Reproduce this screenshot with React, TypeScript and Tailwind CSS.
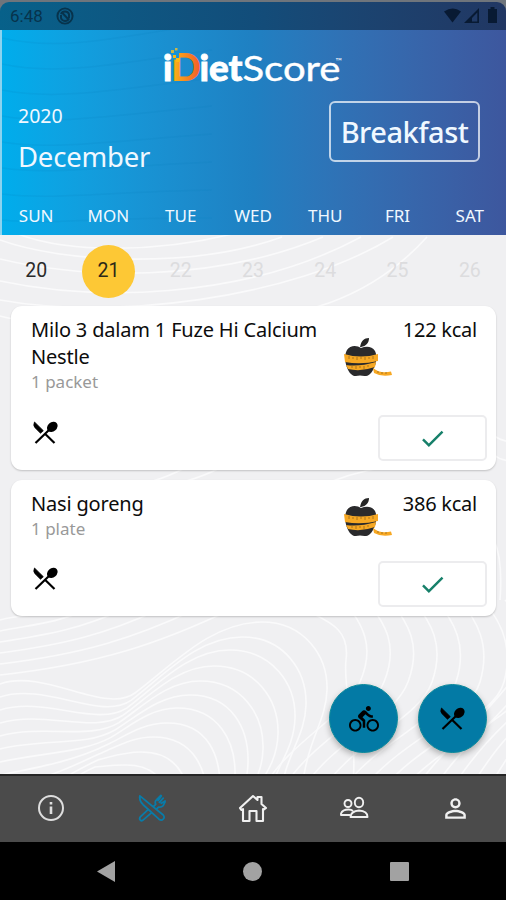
import { FC, ReactNode } from 'react';
import { MdCheck, MdDirectionsBike, MdOutlinePersonOutline } from 'react-icons/md';

interface Meal {
    name: string;
    portion: string;
    kcal: number;
    appleClass: string;
    heightClass: string;
}

const days = ['SUN', 'MON', 'TUE', 'WED', 'THU', 'FRI', 'SAT'];
const dates = [20, 21, 22, 23, 24, 25, 26];
const today = 21;

const meals: Meal[] = [
    {
        name: 'Milo 3 dalam 1 Fuze Hi Calcium Nestle',
        portion: '1 packet',
        kcal: 122,
        appleClass: 'mt-[22px]',
        heightClass: 'h-[164px]',
    },
    {
        name: 'Nasi goreng',
        portion: '1 plate',
        kcal: 386,
        appleClass: 'mt-[8px]',
        heightClass: 'h-[136px]',
    },
];

// Nested loops at the bottom left: [peakX, peakY, rightX]
const loops = [
    [262, 622, 327],
    [242, 637, 306],
    [230, 650, 295],
    [214, 666, 278],
    [200, 681, 263],
    [190, 695, 248],
    [177, 708, 235],
    [167, 723, 220],
    [153, 737, 207],
    [141, 752, 190],
    [126, 765, 170],
];

const loopPath = (x: number, y: number, r: number, i: number) => {
    const px = 135 - i * 4;
    const py = 693 + i * 7.4;
    const y0 = 684 + i * 13;
    return [
        `M0 ${y0}`,
        `C45 ${y0 - 16 + i} ${px - 30} ${py + 22 - i} ${px} ${py}`,
        `C${px + (x - px) * 0.3} ${py + (y - py) * 0.4} ${x - (x - px) * 0.4} ${y} ${x} ${y}`,
        `C${x + 42} ${y} ${r + 1} ${y + 34} ${r} ${y + 68}`,
        `S${r - 22} ${y + 118} ${r - 26} 800`,
    ].join('');
};

const Contours: FC = () => (
    <svg
        className="absolute inset-0 w-full h-full"
        viewBox="0 235 506 539"
        preserveAspectRatio="none"
        fill="none"
        stroke="#fafafb"
        strokeWidth="1.6"
    >
        {loops.map(([x, y, r], i) => (
            <path key={i} d={loopPath(x, y, r, i)} />
        ))}
        {[0, 1, 2, 3, 4, 5].map((i) => (
            <path key={i} d={`M0 ${620 + i * 11}C${20 + i * 16} ${614 + i * 10} ${30 + i * 26} ${618 + i * 5} ${50 + i * 36} 610`} />
        ))}
        <path d="M350 800C362 750 342 690 346 660S330 622 310 612" />
        {[0, 1, 2, 3, 4, 5, 6, 7].map((i) => (
            <path
                key={i}
                d={`M${344 + i * 23} 600C${362 + i * 23} ${625 - i} ${376 + i * 23} 645 ${360 + i * 24} 682S${290 + i * 22} 740 ${262 + i * 20} 790`}
            />
        ))}
        {[0, 1, 2, 3, 4, 5].map((i) => (
            <path key={i} d={`M${415 + i * 18} 790C${440 + i * 18} 750 ${480 + i * 12} 724 520 ${670 + i * 20}`} />
        ))}
        <path d="M18 234C70 254 160 252 232 234" />
        <path d="M0 240C60 262 190 270 282 237" />
        <path d="M0 259C80 278 210 284 323 237" />
        <path d="M0 281C90 300 240 302 361 237" />
        <path d="M0 300C110 320 290 300 393 237" />
        <path d="M200 325C300 320 370 300 427 237" />
        <path d="M0 316C20 322 40 320 60 318M120 490Q165 480 190 465M150 490Q200 480 225 465M330 482Q365 468 410 464" />
        <path d="M494 436Q500 440 510 442M494 455Q500 460 510 461M494 540Q503 560 500 600" />
    </svg>
);

const Logo: FC = () => (
    <svg className="absolute left-[155px] top-[30px]" width="200" height="70" viewBox="155 30 200 70">
        <defs>
            <linearGradient id="d" x1="0" x2="1">
                <stop offset="0" stopColor="#fcb814" />
                <stop offset="1" stopColor="#f15a2b" />
            </linearGradient>
        </defs>
        <g fontFamily="Lato, sans-serif">
            <text x="171" y="81" fontSize="37.5" fontWeight="900" fill="url(#d)" textLength="30" lengthAdjust="spacingAndGlyphs">D</text>
            <g fill="#fff" stroke="#fff" strokeWidth="0.8" fontWeight="900">
                <text x="163" y="81" fontSize="36">i</text>
                <text x="199.500" y="81" fontSize="36" textLength="43" lengthAdjust="spacingAndGlyphs">iet</text>
            </g>
            <text x="242.500" y="81" fontSize="34.500" fill="#fff" stroke="#fff" strokeWidth="0.4" textLength="98" lengthAdjust="spacingAndGlyphs">Score</text>
            <text x="335.500" y="64" fontSize="8.500" fill="#fff">™</text>
        </g>
        <rect x="172" y="52" width="7" height="7.500" fill="#1793d6" />
        <path d="M173 55h3v3h-3zM176 58h4v4h-4z" fill="#fcb814" />
        <path d="M171 50h3v3h-3zM175 48h2.500v2.500h-2.500z" fill="#c9b64a" />
    </svg>
);

const StatusBar: FC = () => (
    <div className="h-[30px] bg-[#6f757c] pt-[2px]">
        <div className="h-full rounded-t-[9px] bg-linear-to-r from-[#07618a] via-[#124d7a] to-[#213763] flex items-center pl-[10px] pr-[8px] text-[#07334c]">
            <span className="font-[family-name:Roboto] text-[17px] leading-none">6:48</span>
            <svg className="ml-[13px]" width="18" height="18" viewBox="0 0 18 18" fill="none" stroke="currentColor" strokeWidth="1.900">
                <circle cx="9" cy="9" r="7.600" />
                <path d="M5 7.200a4.300 4.300 0 0 1 8 0v4M13 11.500a4.300 4.300 0 0 1-8-.5V8M6 5.500l7 7.500" />
            </svg>
            <svg className="ml-auto text-[#081a33]" width="54" height="18" viewBox="0 0 54 18" fill="currentColor">
                <path d="M0 4.500Q9 -1.500 17 4.500L8.500 15.500z" />
                <path d="M35 1v15H20zM33.300 5.500l-5.300 5.500v3.500h5.300z" fillRule="evenodd" />
                <path d="M46.500 0h4v2h2.500v14h-9V2h2.500z" />
            </svg>
        </div>
    </div>
);

const Header: FC = () => (
    <header className="h-[205px] flex flex-col justify-between bg-linear-to-r from-[#00adec] via-[#1f80c2] to-[#3d579e] border-l-2 border-[#8bd3ef] text-[#f0f8ff] relative overflow-hidden">
        <svg className="absolute inset-0" width="250" height="205" fill="none" stroke="#0a78b8" strokeOpacity="0.130" strokeWidth="1.500">
            {[0, 1, 2, 3, 4, 5, 6, 7].map((i) => (
                <path key={i} d={`M0 ${8 + i * 26}C50 ${20 + i * 25} 100 ${12 + i * 25} 210 ${-8 + i * 28}`} />
            ))}
        </svg>
        <div className="relative flex justify-between pl-[16px] pr-[26px] pt-[71px]">
            <div>
                <div className="text-[19.5px] leading-[30px]">2020</div>
                <div className="text-[27.5px] leading-[52px] tracking-[-0.2px]">December</div>
            </div>
            <div className="w-[151px] h-[61px] rounded-[6px] border-2 border-white/70 flex items-center justify-center text-[29px] tracking-[-0.5px] font-medium">
                Breakfast
            </div>
        </div>
        <div className="relative -ml-[2px] grid grid-cols-7 pb-[7px] text-center text-[17px] leading-[24px]">
            {days.map((day) => (
                <span key={day}>{day}</span>
            ))}
        </div>
    </header>
);

const Apple: FC = () => (
    <svg width="48" height="40" viewBox="0 0 48 40" className="shrink-0">
        <path d="M16 9C17 3 20 0 25 0c0 5-3 8-8 9z" fill="#252525" />
        <path d="M17 10C13 7 6 7 3 12C-1 19 2 31 7 36c3 3 6 2 9 1.500c3 .5 7 1.500 10-1.500c6-6 8-17 5-23c-3-5-9-5-14-3z" fill="#2a2a2c" />
        <path d="M0 16q17 5 34 0v7q-17 4-33 1z" fill="#f7a823" />
        <path d="M2 27q13 2 30-3l-1 5q-14 5-27 2z" fill="#f7a823" />
        <path d="M29 30q7 6 18 3.500l1 3.500q-11 2-18-2z" fill="#f7a823" />
        <path d="M5 18v3M9 19v2M13 19v3M17 19v2M21 19v3M25 19v2M29 18v3M8 28v2M12 28v3M16 28v2M20 28v3M24 27v2M34 33v2M38 34v2M42 34v2" stroke="#6d4b19" strokeOpacity="0.600" strokeWidth="0.900" />
    </svg>
);

const Cutlery: FC<{ className?: string }> = ({ className }) => (
    <svg width="25" height="24" viewBox="0 0 25 24" className={className}>
        <path d="M1.500 1Q0 4.500 1.800 6.500L7.500 12.200L10.300 9.700Z" fill="currentColor" stroke="currentColor" strokeWidth="0.8" strokeLinejoin="round" />
        <ellipse cx="19.300" cy="5.800" rx="5.800" ry="4.600" transform="rotate(-42 19.300 5.800)" fill="currentColor" />
        <path d="M16 9L2.500 22M11.500 12.200L21.500 22" stroke="currentColor" strokeWidth="2.200" fill="none" />
    </svg>
);

const MealCard: FC<{ meal: Meal }> = ({ meal }) => (
    <article
        className={`${meal.heightClass} rounded-[11px] bg-white shadow-[0_1px_2px_rgba(0,0,0,0.2)] flex flex-col justify-between pl-[20px] pr-[9px] pt-[10px] pb-[9px]`}
    >
        <div className="flex">
            <div className="w-[313px]">
                <h2 className="w-[300px] text-[20px] leading-[27px] tracking-[-0.18px] text-[#0c0c0c]">{meal.name}</h2>
                <p className="text-[17px] leading-[24px] text-[#999]">{meal.portion}</p>
            </div>
            <div className={meal.appleClass}>
                <Apple />
            </div>
            <div className="ml-auto -mx-4 pr-[26px] text-[20px] leading-[27px] tracking-[-0.25px] whitespace-nowrap text-[#0c0c0c]">
                {meal.kcal} kcal
            </div>
        </div>
        <div className="-mt-10 flex items-start justify-between">
            <Cutlery className="ml-[2px] mt-[6px] text-black" />
            <button className="w-[109px] h-[46px] rounded-[5px] border-2 border-[#ececee] flex items-center justify-center text-[#17806a]">
                <MdCheck size={29} />
            </button>
        </div>
    </article>
);

const Fab: FC<{ children: ReactNode }> = ({ children }) => (
    <button className="w-[69px] h-[69px] rounded-full bg-[#037aa5] border border-[#0a8a9c] shadow-[0_3px_6px_rgba(0,0,0,0.28)] flex items-center justify-center text-black">
        {children}
    </button>
);

const BottomNav: FC = () => (
    <nav className="h-[68px] border-t-2 border-[#252525] bg-[#4b4b4b] pb-[2px] grid grid-cols-5 items-center justify-items-center text-[#f0f0f0]">
        <svg width="28" height="28" viewBox="0 0 28 28" fill="none" stroke="#dedede" strokeWidth="2">
            <circle cx="14" cy="14" r="12" />
            <path d="M14 12.500v7.500M14 8v2.500" strokeWidth="2.600" />
        </svg>
        <svg width="28" height="28" viewBox="0 0 30 30" fill="none" stroke="#087ca9" strokeWidth="1.900" strokeLinejoin="round" strokeLinecap="round">
            <path d="M2 2Q1 7 5.500 11.500L22.500 27Q25 29 27 27Q29 25 27 22.500Z" />
            <path d="M10.500 17L2.500 24.500Q1 26.500 2.500 28Q4 29.500 6 27.500L14 20.500" />
            <path d="M17 13l2-2Q17.500 8 20 6L24.500 1.500M20 16l2-2Q25 14.500 27 12.500L29 8.500M25 2l-3.500 5M27 4.500L23 9M29 7.500L25 10" />
        </svg>
        <svg width="30" height="30" viewBox="0 0 30 30" fill="none" stroke="currentColor" strokeWidth="2.100" strokeLinejoin="round">
            <path d="M2 15L15 3l4.500 4V4h4v7L28 15l-2 1.500l-1-.5v12h-6.500V18h-7v10H5V16l-1.500 1z" />
        </svg>
        <svg width="30" height="24" viewBox="0 0 30 24" fill="none" stroke="currentColor" strokeWidth="1.900" strokeLinejoin="round">
            <circle cx="9" cy="7.500" r="3.500" />
            <ellipse cx="20" cy="6.500" rx="4.200" ry="4.800" />
            <path d="M11 19H2v-1.500q1.500-4 7.500-4q3 0 4.500 1.500" />
            <path d="M11.500 21h17q0-6-8.500-6.500Q12 15 11.500 21z" />
        </svg>
        <MdOutlinePersonOutline size={31} />
    </nav>
);

const SystemNav: FC = () => (
    <div className="h-[58px] bg-black flex items-center justify-between px-[97px]">
        <svg width="18" height="21" fill="#a2a2a2">
            <path d="M18 0v21L0 10.500z" />
        </svg>
        <div className="w-[19px] h-[19px] rounded-full bg-[#a2a2a2]" />
        <div className="w-[19px] h-[19px] rounded-[1px] bg-[#a2a2a2]" />
    </div>
);

export default function App() {
    return (
        <div className="relative w-[506px] h-[900px] overflow-hidden flex flex-col bg-black font-['Noto_Sans',sans-serif]">
            <StatusBar />
            <Header />
            <Logo />
            <main className="relative h-[539px] bg-[#f0f0f2]">
                <Contours />
                <div className="relative h-full flex flex-col">
                    <div className="h-[71px] pt-px grid grid-cols-7 items-center justify-items-center font-[family-name:Roboto] font-normal text-[19.5px] text-[#dcdcde]">
                        {dates.map((date) => (
                            <span
                                key={date}
                                className={
                                    date === today
                                        ? 'w-[53px] h-[53px] rounded-full bg-[#fdc835] text-[#2c2818] flex items-center justify-center'
                                        : date < today
                                          ? 'text-[#2a2a2a]'
                                          : ''
                                }
                            >
                                {date}
                            </span>
                        ))}
                    </div>
                    <div className="flex flex-col gap-[10px] pl-[11px] pr-[10px]">
                        {meals.map((meal) => (
                            <MealCard key={meal.name} meal={meal} />
                        ))}
                    </div>
                    <div className="mt-auto mb-[21px] flex justify-end gap-[20px] pr-[19px]">
                        <Fab>
                            <MdDirectionsBike size={30} />
                        </Fab>
                        <Fab>
                            <Cutlery />
                        </Fab>
                    </div>
                </div>
            </main>
            <BottomNav />
            <SystemNav />
        </div>
    );
}
